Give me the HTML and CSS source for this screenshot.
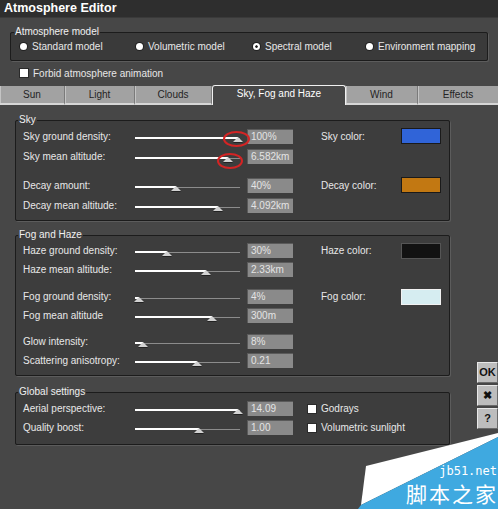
FILE: index.html
```html
<!DOCTYPE html>
<html>
<head>
<meta charset="utf-8">
<link rel="stylesheet" href="styles.css">
</head>
<body>
<div class="window">
  <div class="titlebar">Atmosphere Editor</div>

  <fieldset class="model">
    <legend>Atmosphere model</legend>
    <div class="radios">
      <span class="radio"><span class="dot"></span>Standard model</span>
      <span class="radio"><span class="dot"></span>Volumetric model</span>
      <span class="radio"><span class="dot on"></span>Spectral model</span>
      <span class="radio"><span class="dot"></span>Environment mapping</span>
    </div>
  </fieldset>

  <div class="check forbid"><span class="box"></span>Forbid atmosphere animation</div>

  <div class="tabs">
    <div class="tab t-sun">Sun</div>
    <div class="tab t-light">Light</div>
    <div class="tab t-clouds">Clouds</div>
    <div class="tab active t-sky">Sky, Fog and Haze</div>
    <div class="tab t-wind">Wind</div>
    <div class="tab t-effects">Effects</div>
  </div>

  <div class="main">
    <div class="groups">
      <fieldset class="group sky">
        <legend>Sky</legend>
        <div class="row">
          <span class="label">Sky ground density:</span>
          <div class="slider" style="--v:98%"><span class="fill"></span><span class="thumb"></span></div>
          <span class="value">100%</span>
          <span class="clabel">Sky color:</span><span class="swatch blue"></span>
        </div>
        <div class="row">
          <span class="label">Sky mean altitude:</span>
          <div class="slider" style="--v:89%"><span class="fill"></span><span class="thumb"></span></div>
          <span class="value">6.582km</span>
        </div>
        <div class="row gap">
          <span class="label">Decay amount:</span>
          <div class="slider" style="--v:39%"><span class="fill"></span><span class="thumb"></span></div>
          <span class="value">40%</span>
          <span class="clabel">Decay color:</span><span class="swatch orange"></span>
        </div>
        <div class="row">
          <span class="label">Decay mean altitude:</span>
          <div class="slider" style="--v:79%"><span class="fill"></span><span class="thumb"></span></div>
          <span class="value">4.092km</span>
        </div>
      </fieldset>

      <fieldset class="group fog">
        <legend>Fog and Haze</legend>
        <div class="row">
          <span class="label">Haze ground density:</span>
          <div class="slider" style="--v:30%"><span class="fill"></span><span class="thumb"></span></div>
          <span class="value">30%</span>
          <span class="clabel">Haze color:</span><span class="swatch black"></span>
        </div>
        <div class="row">
          <span class="label">Haze mean altitude:</span>
          <div class="slider" style="--v:68%"><span class="fill"></span><span class="thumb"></span></div>
          <span class="value">2.33km</span>
        </div>
        <div class="row gap">
          <span class="label">Fog ground density:</span>
          <div class="slider" style="--v:4%"><span class="fill"></span><span class="thumb"></span></div>
          <span class="value">4%</span>
          <span class="clabel">Fog color:</span><span class="swatch light"></span>
        </div>
        <div class="row">
          <span class="label">Fog mean altitude</span>
          <div class="slider" style="--v:73%"><span class="fill"></span><span class="thumb"></span></div>
          <span class="value">300m</span>
        </div>
        <div class="row gap2">
          <span class="label">Glow intensity:</span>
          <div class="slider" style="--v:8%"><span class="fill"></span><span class="thumb"></span></div>
          <span class="value">8%</span>
        </div>
        <div class="row">
          <span class="label">Scattering anisotropy:</span>
          <div class="slider" style="--v:59%"><span class="fill"></span><span class="thumb"></span></div>
          <span class="value">0.21</span>
        </div>
      </fieldset>

      <fieldset class="group global">
        <legend>Global settings</legend>
        <div class="row">
          <span class="label">Aerial perspective:</span>
          <div class="slider" style="--v:98%"><span class="fill"></span><span class="thumb"></span></div>
          <span class="value">14.09</span>
          <span class="check gcheck"><span class="box"></span>Godrays</span>
        </div>
        <div class="row">
          <span class="label">Quality boost:</span>
          <div class="slider" style="--v:61%"><span class="fill"></span><span class="thumb"></span></div>
          <span class="value">1.00</span>
          <span class="check gcheck"><span class="box"></span>Volumetric sunlight</span>
        </div>
      </fieldset>
    </div>

    <div class="side">
      <div class="btn">OK</div>
      <div class="btn">&#x2716;</div>
      <div class="btn">?</div>
    </div>
  </div>

  <span class="mark m1"></span>
  <span class="mark m2"></span>

  <div class="watermark">
    <svg class="wm-bg" width="140" height="80" viewBox="0 0 140 80">
      <polygon points="8,37 140,4 140,8 3,76" fill="#ffffff"/>
      <polygon points="140,8 140,80 0,80 3,76" fill="#3fa9e0"/>
    </svg>
    <span class="wm-url">jb51.net</span>
    <span class="wm-cn">脚本之家</span>
  </div>
</div>
</body>
</html>
```

FILE: styles.css
```css
* { box-sizing: border-box; }

body {
  margin: 0;
  background: #474747;
  font-family: "Liberation Sans", Arial, sans-serif;
  font-size: 10px;
  color: #e8e8e8;
}

.window {
  position: relative;
  width: 498px;
  height: 509px;
  overflow: hidden;
  background: #474747;
}

.titlebar {
  height: 18px;
  line-height: 17px;
  padding-left: 4px;
  background: #2e2e2e;
  color: #ffffff;
  font-weight: bold;
  font-size: 12.5px;
  border-bottom: 1px solid #3a3a3a;
}

fieldset {
  margin: 0;
  padding: 0;
  min-width: 0;
  border: 1px solid #1c1c1c;
  box-shadow: 1px 1px 0 #5c5c5c;
}

legend {
  padding: 0 1px;
  line-height: 10px;
  color: #f0f0f0;
  font-size: 10px;
}

/* Atmosphere model */
.model {
  margin: 8px 10px 0 10px;
  padding: 2px 0 8px 9px;
  background: #3a3a3a;
  border-radius: 2px;
}

.model legend {
  margin-left: -6px;
  line-height: 12px;
}

.radios {
  display: grid;
  grid-template-columns: 116px 117px 113px auto;
  height: 12px;
  align-items: center;
}

.radio {
  display: flex;
  align-items: center;
  gap: 5px;
  white-space: nowrap;
}

.dot {
  width: 7px;
  height: 7px;
  border-radius: 50%;
  background: #ffffff;
  box-shadow: 0 0 0 1px #222;
}

.dot.on {
  background: #ffffff;
  border: 2px solid #ffffff;
  box-shadow: 0 0 0 1px #222, inset 0 0 0 2px #1a1a1a;
}

.check {
  display: flex;
  align-items: center;
  gap: 5px;
  white-space: nowrap;
}

.box {
  width: 8px;
  height: 8px;
  background: #ffffff;
  box-shadow: 0 0 0 1px #2a2a2a;
}

.forbid {
  margin: 6px 0 0 20px;
  height: 12px;
}

/* Tabs */
.tabs {
  display: flex;
  margin-top: 7px;
  height: 19px;
}

.tab {
  height: 19px;
  padding-top: 2px;
  line-height: 14px;
  text-align: center;
  background: #a2a2a2;
  color: #242424;
  border-right: 1px solid #7a7a7a;
  border-bottom: 2px solid #d6d6d6;
  box-shadow: inset 1px 0 0 #c4c4c4;
}

.tab.active {
  background: #474747;
  color: #ffffff;
  border: 1px solid #f0f0f0;
  border-bottom: none;
  border-radius: 3px 3px 0 0;
  box-shadow: none;
  padding-top: 1px;
  margin-top: -1px;
  height: 20px;
}

.t-sun { width: 65px; }
.t-light { width: 70px; }
.t-clouds { width: 77px; }
.t-sky { width: 134px; }
.t-wind { width: 72px; }
.t-effects { width: 80px; border-right: none; }

/* Main area */
.main {
  display: flex;
  align-items: flex-start;
}

.groups {
  width: 451px;
  padding-left: 15px;
}

.group {
  width: 435px;
  background: #3d3d3d;
  padding: 0 0 6px 7px;
  border-radius: 2px;
}

.group legend {
  margin-left: -5px;
}

.sky { margin-top: 10px; padding-top: 1px; padding-bottom: 5px; }
.fog { margin-top: 9px; padding-top: 1px; padding-bottom: 5px; }
.global { margin-top: 11px; padding-top: 2px; padding-bottom: 7px; }

.row {
  display: flex;
  align-items: center;
  height: 20px;
}

.fog .row, .global .row { height: 19px; }

.row.gap { margin-top: 9px; }
.fog .row.gap { margin-top: 8px; }
.fog .row.gap2 { margin-top: 7px; }

.label {
  width: 112px;
  white-space: nowrap;
}

.slider {
  position: relative;
  width: 105px;
  height: 15px;
}

.slider::before {
  content: "";
  position: absolute;
  left: 0;
  right: 0;
  top: 9px;
  height: 1px;
  background: #8c8c8c;
}

.fill {
  position: absolute;
  left: 0;
  top: 8px;
  height: 2px;
  width: var(--v);
  background: #ffffff;
}

.thumb {
  position: absolute;
  top: 8px;
  left: var(--v);
  width: 0;
  height: 0;
  margin-left: -5px;
  border-left: 5px solid transparent;
  border-right: 5px solid transparent;
  border-bottom: 5px solid #d2d2d2;
  filter: drop-shadow(0 1px 0 #222);
}

.value {
  margin-left: 7px;
  width: 46px;
  height: 15px;
  line-height: 14px;
  padding-left: 3px;
  background: #8a8a8a;
  color: #e4e4e4;
  border-top: 1px solid #5a5a5a;
  border-left: 1px solid #5a5a5a;
  white-space: nowrap;
}

.clabel {
  margin-left: 28px;
  width: 80px;
}

.swatch {
  width: 40px;
  height: 16px;
  border: 1px solid #1a1a1a;
}

.swatch.blue { background: #3064d8; }
.swatch.orange { background: #c27812; }
.swatch.black { background: #121212; border-color: #555; }
.swatch.light { background: #d6edf1; border-color: #f2f2f2; }

.gcheck {
  margin-left: 15px;
}

/* Side buttons */
.side {
  margin-left: 26px;
  margin-top: 257px;
  display: flex;
  flex-direction: column;
  gap: 2px;
}

.btn {
  width: 21px;
  height: 21px;
  background: #bdbdbd;
  border-top: 1px solid #e8e8e8;
  border-left: 1px solid #e8e8e8;
  border-bottom: 1px solid #6a6a6a;
  border-right: 1px solid #6a6a6a;
  color: #111;
  font-weight: bold;
  font-size: 11px;
  text-align: center;
  line-height: 19px;
}

/* annotation marks */
.mark {
  position: absolute;
  border: 2px solid #d42424;
  border-radius: 50%;
}

.m1 { left: 223px; top: 131px; width: 27px; height: 16px; }
.m2 { left: 217px; top: 153px; width: 26px; height: 16px; }

/* watermark */
.watermark {
  position: absolute;
  right: 0;
  bottom: 0;
  width: 140px;
  height: 80px;
}

.wm-bg {
  position: absolute;
  left: 0;
  top: 0;
  display: block;
}

.wm-url {
  position: absolute;
  right: 1px;
  top: 36px;
  font-family: "DejaVu Sans Mono", monospace;
  font-size: 12px;
  line-height: 12px;
  color: #ffffff;
}

.wm-cn {
  position: absolute;
  right: 0;
  top: 54px;
  font-family: "Noto Sans CJK SC", sans-serif;
  font-size: 21px;
  line-height: 21px;
  letter-spacing: 2px;
  color: #ffffff;
  white-space: nowrap;
}
```
